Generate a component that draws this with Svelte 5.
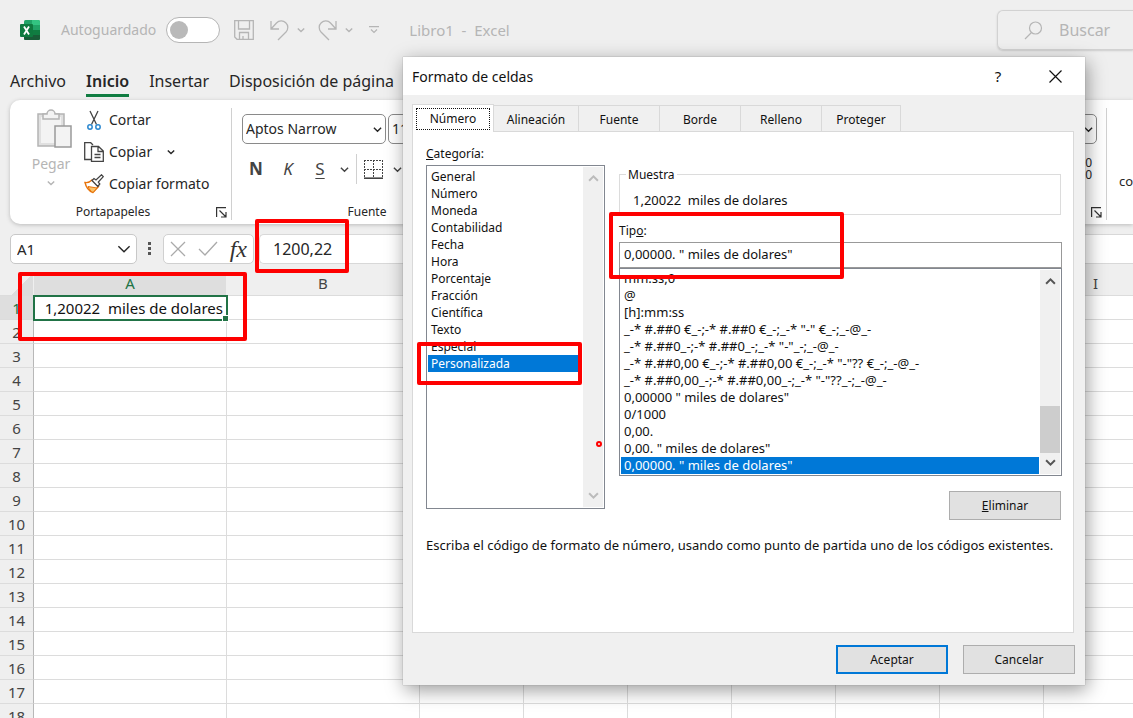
<script lang="ts">
  const menu = ['Archivo', 'Inicio', 'Insertar', 'Disposición de página'];

  const columns = ['A', 'B', 'C', 'D', 'E', 'F', 'G', 'H', 'I'];
  const rows = Array.from({ length: 18 }, (_, i) => i + 1);

  const tabs = ['Número', 'Alineación', 'Fuente', 'Borde', 'Relleno', 'Proteger'];

  const categories = [
    'General', 'Número', 'Moneda', 'Contabilidad', 'Fecha', 'Hora',
    'Porcentaje', 'Fracción', 'Científica', 'Texto', 'Especial', 'Personalizada',
  ];

  const formats = [
    'mm:ss,0',
    '@',
    '[h]:mm:ss',
    '_-* #.##0 €_-;-* #.##0 €_-;_-* "-" €_-;_-@_-',
    '_-* #.##0_-;-* #.##0_-;_-* "-"_-;_-@_-',
    '_-* #.##0,00 €_-;-* #.##0,00 €_-;_-* "-"?? €_-;_-@_-',
    '_-* #.##0,00_-;-* #.##0,00_-;_-* "-"??_-;_-@_-',
    '0,00000 " miles de dolares"',
    '0/1000',
    '0,00.',
    '0,00. " miles de dolares"',
    '0,00000. " miles de dolares"',
  ];

  let activeTab = $state('Número');
  let category = $state('Personalizada');
  let format = $state('0,00000. " miles de dolares"');
</script>

{#snippet chevron(size: number)}
  <svg class="chevron" width={size} height={size} viewBox="0 0 10 10" fill="none" stroke="currentColor">
    <path d="M1 3l4 4 4-4" />
  </svg>
{/snippet}

{#snippet launcher()}
  <button class="launcher" aria-label="Más opciones">
    <svg width="11" height="11" viewBox="0 0 11 11" fill="none" stroke="#333" stroke-width="1.2">
      <path d="M.6 10V.6H10M3.5 3.5l6 6M10 5v5H5" />
    </svg>
  </button>
{/snippet}

<div class="app">
  <!-- Title bar -->
  <header class="titlebar">
    <svg class="logo" width="20" height="20" viewBox="0 0 20 20">
      <rect x="4" width="16" height="20" rx="1.5" fill="#21a366" />
      <path d="M12 0h6.5a1.5 1.5 0 0 1 1.5 1.5V5h-8z" fill="#33c481" />
      <path d="M4 5h8v5H4z" fill="#107c41" />
      <path d="M4 10h16v5H4z" fill="#107c41" />
      <path d="M4 15h16v3.5a1.5 1.5 0 0 1-1.5 1.5h-13A1.5 1.5 0 0 1 4 18.5z" fill="#185c37" />
      <rect y="4" width="13" height="13" rx="1" fill="#0f7a3f" />
      <path d="M4 6.500l5 8M9 6.500l-5 8" stroke="#fff" stroke-width="1.800" />
    </svg>
    <label class="autosave">
      Autoguardado
      <input type="checkbox" role="switch" />
    </label>
    <button class="quick" aria-label="Guardar">
      <svg width="20" height="20" viewBox="0 0 20 20" fill="none" stroke="currentColor" stroke-width="1.3">
        <path d="M.7.7h18.6v18.6H3L.7 17zM4.5.7V9h11V.7M5.500 19v-6.500h9V19M9 19v-3" />
      </svg>
    </button>
    <button class="quick undo" aria-label="Deshacer">
      <svg width="19" height="21" viewBox="0 0 19 21" fill="none" stroke="currentColor" stroke-width="1.3">
        <path d="M1 1v8h8M1 9l5.500-6a6.500 6.500 0 0 1 9.500 9L8 20" />
      </svg>
      {@render chevron(8)}
    </button>
    <button class="quick" aria-label="Rehacer">
      <svg width="19" height="21" viewBox="0 0 19 21" fill="none" stroke="currentColor" stroke-width="1.3">
        <path d="M18 1v8h-8M18 9l-5.500-6a6.500 6.500 0 0 0-9.500 9L11 20" />
      </svg>
      {@render chevron(8)}
    </button>
    <button class="quick" aria-label="Personalizar barra">
      <svg width="10" height="8" viewBox="0 0 10 8" fill="none" stroke="currentColor" stroke-width="1.2">
        <path d="M0 .6h10M2 3.5l3 3 3-3" />
      </svg>
    </button>
    <span class="document">Libro1&nbsp; -&nbsp; Excel</span>
    <button class="search">
      <svg width="19" height="19" viewBox="0 0 19 19" fill="none" stroke="currentColor" stroke-width="1.2">
        <circle cx="11.5" cy="7" r="6" />
        <path d="M7.5 11.5L1 18" />
      </svg>
      Buscar
    </button>
  </header>

  <nav class="menu">
    {#each menu as item}
      <a href="#{item}" class:current={item === 'Inicio'}>{item}</a>
    {/each}
  </nav>

  <!-- Ribbon -->
  <section class="ribbon">
    <div class="group clipboard">
      <div class="tools">
        <button class="paste" disabled>
          <svg width="36" height="40" viewBox="0 0 36 40" fill="#f3f3f3" stroke="#b4b4b4" stroke-width="1.5">
            <path d="M1 5h26v32H1z" fill="#e0e0e0" />
            <path d="M4 8h20v26H4z" stroke="none" />
            <path d="M6 10V5h4a4 4 0 0 1 8 0h4v5z" />
            <path d="M18 17h16v21H18z" stroke="#9a9a9a" />
          </svg>
          Pegar
          {@render chevron(8)}
        </button>
        <div class="commands">
          <button>
            <svg width="20" height="20" viewBox="0 0 20 20" fill="none">
              <path d="M6 1l6.5 13.5M14 1L7.5 14.5" stroke="#444" stroke-width="1.3" />
              <circle cx="6" cy="17" r="2.2" stroke="#2b88d0" stroke-width="1.5" />
              <circle cx="14" cy="17" r="2.2" stroke="#2b88d0" stroke-width="1.5" />
            </svg>
            Cortar
          </button>
          <button>
            <svg width="20" height="20" viewBox="0 0 20 20" fill="none" stroke="#444" stroke-width="1.3">
              <path d="M7 17.500H.7V.7h6L9 3" />
              <path d="M7.500 4.500h7l4.800 4.500v10.300H7.500zM14 4.500v5h5M10.500 12.500h6M10.500 15.500h6" />
            </svg>
            Copiar
            <span class="more">{@render chevron(8)}</span>
          </button>
          <button>
            <svg width="20" height="20" viewBox="0 0 20 20" fill="none">
              <path d="M1 8.500c3 .5 5-.5 7-2.500l6.500 6.500L9 18.500C5 17 2 13 1 8.500z" fill="#fff" stroke="#e8740c" stroke-width="1.4" />
              <path d="M4 12.500l9 1.500L9 18.500c-2-1-4-3.500-5-6z" fill="#f9c46b" stroke="#e8740c" />
              <path d="M8 6.500l2-2 2 1.500L17.500.8l1.800 1.800-5 5.400 1.500 2-2 2.500z" fill="#fff" stroke="#444" stroke-width="1.3" />
            </svg>
            Copiar formato
          </button>
        </div>
      </div>
      <footer><span>Portapapeles</span>{@render launcher()}</footer>
    </div>

    <div class="group font">
      <div class="tools">
        <div class="pickers">
          <span class="picker family">
            <select aria-label="Fuente"><option>Aptos Narrow</option></select>
            {@render chevron(9)}
          </span>
          <span class="picker size">
            <select aria-label="Tamaño"><option>11</option></select>
          </span>
        </div>
        <div class="styles">
          <button class="bold">N</button>
          <button class="italic">K</button>
          <button class="underline">S</button>
          {@render chevron(9)}
          <span class="rule"></span>
          <button class="borders" aria-label="Bordes">
            <svg width="19" height="19" viewBox="0 0 19 19" fill="none" stroke="#444">
              <path d="M.5 0v18M18.5 0v18M9.5 0v18M0 .5h19M0 9.5h19" stroke-dasharray="2 1" />
              <path d="M0 18.200h19" stroke-width="1.6" />
            </svg>
          </button>
          {@render chevron(9)}
        </div>
      </div>
      <footer><span>Fuente</span></footer>
    </div>

    <div class="group number">
      <div class="tools">
        <span class="picker">
          <select aria-label="Formato de número"><option>General</option></select>
          {@render chevron(9)}
        </span>
        <button class="decimals" aria-label="Aumentar decimales"><span>0</span><span>0</span></button>
      </div>
      <footer>{@render launcher()}</footer>
    </div>
    <button class="conditional">co</button>
  </section>

  <!-- Formula bar -->
  <section class="formulabar">
    <span class="picker namebox">
      <select aria-label="Cuadro de nombres"><option>A1</option></select>
      {@render chevron(14)}
    </span>
    <svg class="dots" width="4" height="16" viewBox="0 0 4 16" fill="#555">
      <path d="M0 1h3v3H0zM0 6h3v3H0zM0 11h3v3H0z" />
    </svg>
    <div class="actions">
      <button aria-label="Cancelar">
        <svg width="16" height="16" viewBox="0 0 16 16" stroke="#aaa" stroke-width="1.3"><path d="M1 1l14 14M15 1L1 15" /></svg>
      </button>
      <button aria-label="Introducir">
        <svg width="20" height="16" viewBox="0 0 20 16" fill="none" stroke="#aaa" stroke-width="1.3"><path d="M1 8l6 6L19 1" /></svg>
      </button>
      <button class="fx">fx</button>
    </div>
    <input class="formula" aria-label="Barra de fórmulas" value="1200,22" />
  </section>

  <!-- Sheet -->
  <table class="sheet">
    <colgroup>
      <col class="col-head" />
      <col class="col-wide" />
      <col class="col-wide" />
      {#each columns.slice(2) as _}
        <col class="col-narrow" />
      {/each}
    </colgroup>
    <thead>
      <tr>
        <th class="corner"></th>
        {#each columns as column}
          <th class:selected={column === 'A'}>{column}</th>
        {/each}
      </tr>
    </thead>
    <tbody>
      {#each rows as row}
        <tr>
          <th class:selected={row === 1}>{row}</th>
          {#each columns as column}
            {#if row === 1 && column === 'A'}
              <td class="active">1,20022&nbsp; miles de dolares</td>
            {:else}
              <td></td>
            {/if}
          {/each}
        </tr>
      {/each}
    </tbody>
  </table>

  <!-- Format cells dialog -->
  <div class="dialog" role="dialog" aria-labelledby="dialog-title">
    <header class="dialog-title">
      <h1 id="dialog-title">Formato de celdas</h1>
      <button>?</button>
      <button aria-label="Cerrar">
        <svg width="13" height="13" viewBox="0 0 13 13" stroke="#111" stroke-width="1.2"><path d="M.5.5l12 12M12.500.5l-12 12" /></svg>
      </button>
    </header>

    <div class="dialog-body">
      <div class="tabs" role="tablist">
        {#each tabs as tab}
          <button role="tab" aria-selected={tab === activeTab} class:active={tab === activeTab} onclick={() => (activeTab = tab)}>
            <span>{tab}</span>
          </button>
        {/each}
      </div>

      <div class="panel" role="tabpanel">
        <div class="category">
          <span class="label" id="category-label"><u>C</u>ategoría:</span>
          <div class="listbox" role="listbox" aria-labelledby="category-label">
            <div class="options">
              {#each categories as item}
                <button role="option" aria-selected={item === category} onclick={() => (category = item)}>{item}</button>
              {/each}
            </div>
            <div class="scrollbar idle">
              <span class="up">{@render chevron(11)}</span>
              {@render chevron(11)}
            </div>
          </div>
        </div>

        <div class="detail">
          <fieldset>
            <legend>Muestra</legend>
            <span class="sample">1,20022&nbsp; miles de dolares</span>
          </fieldset>
          <label class="label" for="type">Tip<u>o</u>:</label>
          <input id="type" bind:value={format} />
          <div class="listbox formats" role="listbox" aria-label="Tipo">
            <div class="options">
              {#each formats as item}
                <button role="option" aria-selected={item === format} onclick={() => (format = item)}>{item}</button>
              {/each}
            </div>
            <div class="scrollbar">
              <span class="up">{@render chevron(11)}</span>
              <span class="thumb"></span>
              {@render chevron(11)}
            </div>
          </div>
          <button class="push"><span><u>E</u>liminar</span></button>
        </div>

        <p>Escriba el código de formato de número, usando como punto de partida uno de los códigos existentes.</p>
      </div>

      <footer class="dialog-actions">
        <button class="push default">Aceptar</button>
        <button class="push">Cancelar</button>
      </footer>
    </div>
  </div>

  <!-- Red annotations -->
  <div class="mark mark-formula"></div>
  <div class="mark mark-cell"></div>
  <div class="mark mark-category"></div>
  <div class="mark mark-type"></div>
  <div class="mark-dot"></div>
</div>

<style>
  :global(body) {
    margin: 0;
    background: #efefef;
  }

  .app {
    position: relative;
    height: 100vh;
    overflow: hidden;
    display: flex;
    flex-direction: column;
    background: #efefef;
    color: #262626;
    font-family: 'Noto Sans', 'Open Sans', sans-serif;
    font-size: 15px;
    line-height: 20px;
  }

  .app * { box-sizing: border-box; }

  button, input, select {
    font: inherit;
    color: inherit;
    margin: 0;
    padding: 0;
    border: 0;
    background: none;
    border-radius: 0;
  }

  select { appearance: none; }
  svg { flex-shrink: 0; display: block; }

  .chevron path {
    stroke-width: 1.4px;
    vector-effect: non-scaling-stroke;
  }

  /* ── Title bar ── */
  .titlebar {
    display: flex;
    align-items: center;
    flex-shrink: 0;
    height: 60px;
    padding-left: 20px;
    color: #b5b5b5;
  }

  .autosave {
    display: flex;
    align-items: center;
    gap: 10px;
    margin: 0 14px 0 21px;
    font-size: 14px;
  }

  .autosave input {
    appearance: none;
    width: 54px;
    height: 26px;
    padding: 3px;
    border: 1px solid #b5b5b5;
    border-radius: 13px;
    background: #fff;
  }

  .autosave input::before {
    content: '';
    display: block;
    width: 18px;
    height: 18px;
    border-radius: 50%;
    background: #b9b9b9;
  }

  .quick {
    display: flex;
    align-items: center;
    gap: 8px;
    margin-right: 16px;
  }

  .undo { margin-right: 13px; }

  .document { margin-left: 14px; }

  .search {
    display: flex;
    align-items: center;
    gap: 16px;
    width: 136px;
    height: 40px;
    margin-left: auto;
    padding-left: 26px;
    border: 1px solid #d2d2d2;
    border-right: 0;
    border-radius: 6px 0 0 6px;
    box-shadow: 0 1px 2px #ccc;
    font-size: 16px;
  }

  /* ── Menu ── */
  .menu {
    display: flex;
    flex-shrink: 0;
    gap: 20px;
    height: 40px;
    padding: 10px 10px 0;
    font-size: 16px;
    line-height: 22px;
    white-space: nowrap;
  }

  .menu a {
    height: 27px;
    color: inherit;
    text-decoration: none;
  }

  .menu .current {
    font-weight: 600;
    border-bottom: 3px solid #107c41;
  }

  /* ── Ribbon ── */
  .ribbon {
    display: flex;
    flex-shrink: 0;
    height: 124px;
    margin-left: 10px;
    padding-top: 8px;
    background: #fff;
    border-radius: 10px 0 0 10px;
    box-shadow: 0 1px 4px #bbb;
    font-size: 14px;
  }

  .group {
    display: flex;
    flex-direction: column;
    height: 112px;
    border-right: 1px solid #d0d0d0;
  }

  .group footer {
    display: flex;
    align-items: center;
    justify-content: flex-end;
    height: 16px;
    margin-top: auto;
    padding-right: 4px;
    font-size: 12px;
    line-height: 16px;
  }

  .group footer span {
    flex: 1;
    text-align: center;
  }

  .launcher { width: 11px; height: 11px; }

  .clipboard { width: 222px; }

  .clipboard .tools {
    display: flex;
    gap: 12px;
    padding-left: 20px;
  }

  .paste {
    display: flex;
    flex-direction: column;
    align-items: center;
    gap: 5px;
    width: 42px;
    padding-top: 1px;
    color: #b5b5b5;
  }

  .paste svg:first-child { margin-left: 7px; }

  .commands {
    display: flex;
    flex-direction: column;
    gap: 12px;
    padding-top: 2px;
  }

  .commands button {
    display: flex;
    align-items: center;
    gap: 5px;
  }

  .commands .more { margin-left: 10px; }

  .font {
    width: 300px;
    padding-left: 10px;
  }

  .pickers {
    display: flex;
    gap: 2px;
    padding-top: 6px;
  }

  .picker {
    display: flex;
    align-items: center;
    height: 30px;
    padding: 0 3px;
    border: 1px solid #8a8a8a;
    border-radius: 5px;
    background: #fff;
  }

  .picker select { flex: 1; min-width: 0; }

  .family { width: 144px; }
  .size { width: 60px; }

  .styles {
    display: flex;
    align-items: center;
    gap: 12px;
    margin-top: 10px;
    padding-left: 4px;
    color: #444;
    font-size: 17px;
    line-height: 30px;
  }

  .styles button { width: 20px; }

  .styles .rule {
    width: 1px;
    height: 30px;
    margin: 0 -5px;
    background: #d0d0d0;
  }

  .styles .underline + .chevron { margin-left: -2px; }
  .styles .borders + .chevron { margin-left: -3px; }
  .bold { font-weight: 700; }
  .italic { font-style: italic; }
  .underline { text-decoration: underline; text-underline-offset: 3px; }

  .font footer { padding-right: 39px; }

  .number {
    width: 150px;
    margin-left: auto;
  }

  .number .tools {
    display: flex;
    flex-direction: column;
    align-items: flex-end;
    gap: 13px;
    padding: 6px 9px 0 0;
  }

  .number .picker { width: 120px; }

  .decimals {
    display: flex;
    flex-direction: column;
    padding-right: 5px;
    font-size: 12px;
    line-height: 12px;
  }

  .conditional {
    width: 26px;
    height: 20px;
    margin-top: 63px;
    padding-left: 12px;
    text-align: left;
    font-size: 13px;
  }

  /* ── Formula bar ── */
  .formulabar {
    display: flex;
    align-items: center;
    flex-shrink: 0;
    height: 50px;
    padding-left: 10px;
  }

  .namebox {
    width: 127px;
    padding: 0 5px 0 6px;
    border-color: #c8c8c8;
  }

  .dots { margin: 0 11px; }

  .actions {
    display: flex;
    align-items: center;
    justify-content: space-between;
    width: 91px;
    height: 30px;
    margin-right: 5px;
    padding: 0 6px;
    border: 1px solid #d0d0d0;
    border-radius: 5px;
    background: #fff;
  }

  .fx {
    color: #333;
    font: italic 24px/26px 'Liberation Serif', serif;
  }

  .formula {
    flex: 1;
    height: 30px;
    padding-left: 13px;
    border: 1px solid #d8d8d8;
    border-right: 0;
    border-radius: 5px 0 0 5px;
    background: #fff;
    font-size: 16px;
  }

  /* ── Sheet ── */
  .sheet {
    width: 100%;
    table-layout: fixed;
    border-collapse: separate;
    border-spacing: 0;
    background: #fff;
  }

  .col-head { width: 34px; }
  .col-wide { width: 193px; }
  .col-narrow { width: 104px; }

  .sheet th, .sheet td {
    height: 24px;
    padding: 0;
    border-right: 1px solid #dcdcdc;
    border-bottom: 1px solid #dcdcdc;
    white-space: nowrap;
  }

  .sheet th {
    background: #efefef;
    color: #444;
    font-weight: 400;
    text-align: center;
  }

  .sheet thead th {
    height: 22px;
    padding-bottom: 2px;
    line-height: 19px;
    border-right-color: #efefef;
  }

  .sheet tbody th { border-right-color: #b8b8b8; }

  .sheet th.selected {
    background: #dedede;
    color: #217346;
  }

  .sheet .corner { background: linear-gradient(135deg, #efefef 60%, #dcdcdc 60%); }

  .sheet .active {
    position: relative;
    padding-right: 3px;
    text-align: right;
    color: #111;
    outline: 2px solid #217346;
    outline-offset: -1px;
  }

  .sheet .active::after {
    content: '';
    position: absolute;
    right: -3px;
    bottom: -3px;
    width: 5px;
    height: 5px;
    background: #217346;
    border: 1px solid #fff;
    box-sizing: content-box;
  }

  /* ── Dialog ── */
  .dialog {
    position: absolute;
    top: 57px;
    left: 403px;
    width: 682px;
    background: #f0f0f0;
    box-shadow: 0 0 1px #888, 2px 5px 18px rgba(0, 0, 0, 0.4);
    color: #111;
    font-size: 12px;
    line-height: 17px;
  }

  .dialog-title {
    display: flex;
    align-items: center;
    height: 38px;
    padding: 0 8px 0 9px;
    background: #fff;
  }

  .dialog-title h1 {
    flex: 1;
    margin: 0;
    font-size: 14px;
    font-weight: 400;
  }

  .dialog-title button {
    display: grid;
    place-items: center;
    width: 44px;
    font-size: 15px;
  }

  .dialog-title button + button { margin-left: 13px; }

  .dialog-body { padding: 9px 11px 11px 9px; }

  .tabs {
    display: flex;
    align-items: flex-end;
    height: 27px;
  }

  .tabs button {
    width: 81px;
    height: 26px;
    padding-top: 2px;
    border: 1px solid #d9d9d9;
    border-bottom: 0;
    border-left: 0;
  }

  .tabs button:nth-child(2) { width: 85px; }
  .tabs button:last-child { width: 79px; }

  .tabs .active {
    position: relative;
    width: 82px;
    height: 28px;
    margin-bottom: -1px;
    padding: 3px;
    border-left: 1px solid #d9d9d9;
    background: #fff;
  }

  .tabs .active span {
    display: block;
    border: 1px dotted #111;
    line-height: 20px;
  }

  .panel {
    display: grid;
    grid-template-columns: 179px 1fr;
    column-gap: 14px;
    align-content: start;
    height: 502px;
    padding: 13px 11px 0 13px;
    border: 1px solid #d9d9d9;
    background: #fff;
  }

  .label { display: block; height: 20px; }

  .listbox {
    display: flex;
    padding: 1px;
    border: 1px solid #828790;
    background: #fff;
  }

  .category .listbox { height: 344px; }

  .options { flex: 1; }

  .category .options { padding-top: 1px; }

  .options button {
    display: block;
    width: 100%;
    height: 17px;
    padding-left: 3px;
    text-align: left;
    white-space: pre;
  }

  .options button[aria-selected='true'] {
    background: #0078d7;
    color: #fff;
  }

  .scrollbar {
    display: flex;
    flex-direction: column;
    align-items: center;
    justify-content: space-between;
    width: 20px;
    margin-left: 1px;
    padding: 6px 0;
    background: #f0f0f0;
    color: #555;
  }

  .scrollbar .chevron path { stroke-width: 2px; }

  .idle { color: #bbb; }
  .category .options { margin-right: 3px; }
  .up { transform: rotate(180deg); }

  .thumb {
    width: 100%;
    height: 47px;
    margin: auto 0 4px;
    background: #cdcdcd;
  }

  .sample, #type, .formats, .panel p { font-size: 13px; }

  .detail {
    display: flex;
    flex-direction: column;
    padding-top: 21px;
  }

  fieldset {
    height: 49px;
    margin: 0 1px 7px 0;
    padding: 9px 13px 0;
    border: 1px solid #dcdcdc;
  }

  legend {
    margin-left: -7px;
    padding: 0 2px;
    line-height: 17px;
  }

  #type {
    height: 26px;
    padding: 0 0 2px 4px;
    border: 1px solid #999;
  }

  .push {
    width: 112px;
    height: 29px;
    border: 1px solid #adadad;
    background: #e1e1e1;
  }

  .detail .push {
    align-self: flex-end;
    margin: 15px 1px 0 0;
  }

  .panel p {
    grid-column: 1 / -1;
    margin: 17px 0 0;
    white-space: nowrap;
  }

  .dialog-actions {
    display: flex;
    justify-content: flex-end;
    gap: 15px;
    margin-right: -1px;
    padding-top: 12px;
  }

  .default { border: 2px solid #0078d7; }

  /* ── Annotations ── */
  .mark {
    position: absolute;
    border: 4px solid #fe0000;
    border-radius: 2px;
    pointer-events: none;
  }

  .mark-formula { left: 255px; top: 219px; width: 94px; height: 54px; }
  .mark-cell { left: 18px; top: 272px; width: 229px; height: 69px; }
  .mark-category { left: 417px; top: 342px; width: 165px; height: 43px; }
  .mark-type { left: 609px; top: 212px; width: 235px; height: 67px; }

  .mark-dot {
    position: absolute;
    left: 596px;
    top: 441px;
    width: 6px;
    height: 6px;
    border: 2px solid #fe0000;
    border-radius: 50%;
  }
</style>
